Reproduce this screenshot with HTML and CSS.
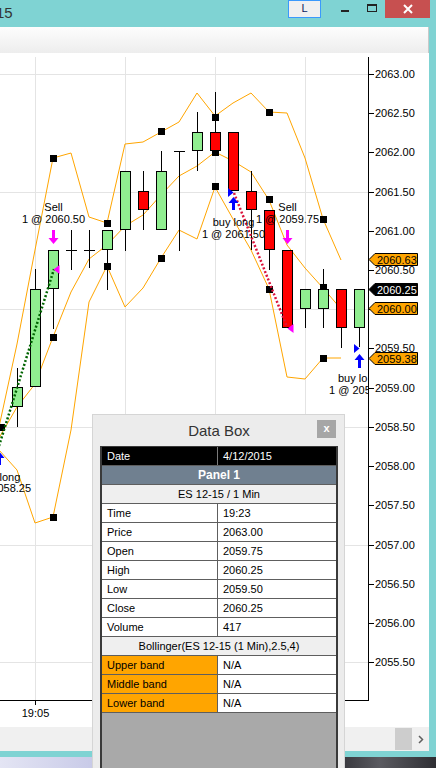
FILE: index.html
```html
<!DOCTYPE html>
<html>
<head>
<meta charset="utf-8">
<title>Chart</title>
<link rel="stylesheet" href="styles.css">
</head>
<body>
<div class="screen">
  <header class="titlebar">
    <div class="title">15</div>
    <div class="lbtn">L</div>
    <div class="cap cap-min"><span class="min-icon"></span></div>
    <div class="cap cap-max"><span class="max-icon"></span></div>
    <div class="cap cap-close">
      <svg width="12" height="12" viewBox="0 0 12 12"><path d="M2 2L10 10M10 2L2 10" stroke="#fff" stroke-width="2"/></svg>
    </div>
  </header>

  <main class="client">
    <div class="toolbar"></div>
    <div class="chart">
      <svg class="chart-svg" width="429" height="674" viewBox="0 53 429 674" xmlns="http://www.w3.org/2000/svg" font-family="Liberation Sans, Arial, sans-serif" font-size="11">
        <defs><clipPath id="plot"><rect x="0" y="53" width="368" height="647"/></clipPath></defs>
        <g stroke="#e4e4e4" shape-rendering="crispEdges">
          <path d="M0 74.5H368M0 192.5H368M0 309.5H368M0 427.5H368M0 545.5H368M0 662.5H368M35.5 57V700M125.5 57V700M215.5 57V700M305.5 57V700"/>
        </g>
        <g clip-path="url(#plot)">
          <g fill="none" stroke="#ffa500" stroke-width="1">
            <polyline points="-1,427 17,344 35,250 53,158 71,153 89,217 107,223 125,144 143,142 161,132 179,122 197,93 215,116 233,103 251,93 269,112 287,113 305,158 323,219 341,260"/>
            <polyline points="-1,438 17,407 35,384 53,337 71,292 89,259 107,245 125,226 143,215 161,195 179,176 197,166 215,152 233,161 251,172 269,200 287,245 305,268 323,288 341,309"/>
            <polyline points="-1,450 17,470 35,523 53,517 71,430 89,302 107,266 125,307 143,288 161,258 179,230 197,239 215,187 233,219 251,250 269,289 287,377 305,379 323,358 341,358"/>
          </g>
          <g fill="#000" shape-rendering="crispEdges">
            <rect x="-2" y="424" width="7" height="7"/>
            <rect x="50" y="155" width="7" height="7"/>
            <rect x="50" y="334" width="7" height="7"/>
            <rect x="50" y="514" width="7" height="7"/>
            <rect x="104" y="220" width="7" height="7"/>
            <rect x="104" y="263" width="7" height="7"/>
            <rect x="158" y="128" width="7" height="7"/>
            <rect x="158" y="255" width="7" height="7"/>
            <rect x="212" y="114" width="7" height="7"/>
            <rect x="212" y="149" width="7" height="7"/>
            <rect x="212" y="183" width="7" height="7"/>
            <rect x="266" y="109" width="7" height="7"/>
            <rect x="266" y="196" width="7" height="7"/>
            <rect x="266" y="286" width="7" height="7"/>
            <rect x="320" y="216" width="7" height="7"/>
            <rect x="320" y="284" width="7" height="7"/>
            <rect x="320" y="355" width="7" height="7"/>
          </g>
          <g stroke="#000" stroke-width="1" shape-rendering="crispEdges">
            <path d="M17.5 368V427M35.5 269V387M53.5 250V329M71.5 230V270M66 250.5H77M89.5 230V268M84 250.5H95M107.5 230V290M125.5 171V251M143.5 171V230M161.5 151V230M179.5 151V251M174 151.5H185M197.5 112V171M215.5 92V151M233.5 132V191M251.5 171V250M269.5 210V270M287.5 250V328M305.5 289V328M323.5 269V328M341.5 289V348M359.5 289V347"/>
            <rect x="12.5" y="387.5" width="10" height="19" fill="#90ee90"/>
            <rect x="30.5" y="289.5" width="10" height="97" fill="#90ee90"/>
            <rect x="48.5" y="250.5" width="10" height="38" fill="#90ee90"/>
            <rect x="102.5" y="230.5" width="10" height="19" fill="#90ee90"/>
            <rect x="120.5" y="171.5" width="10" height="58" fill="#90ee90"/>
            <rect x="138.5" y="191.5" width="10" height="18" fill="#ff0000"/>
            <rect x="156.5" y="171.5" width="10" height="58" fill="#90ee90"/>
            <rect x="192.5" y="132.5" width="10" height="18" fill="#90ee90"/>
            <rect x="210.5" y="132.5" width="10" height="18" fill="#ff0000"/>
            <rect x="228.5" y="132.5" width="10" height="58" fill="#ff0000"/>
            <rect x="246.5" y="191.5" width="10" height="18" fill="#ff0000"/>
            <rect x="264.5" y="210.5" width="10" height="39" fill="#ff0000"/>
            <rect x="282.5" y="250.5" width="10" height="77" fill="#ff0000"/>
            <rect x="300.5" y="289.5" width="10" height="19" fill="#90ee90"/>
            <rect x="318.5" y="289.5" width="10" height="19" fill="#90ee90"/>
            <rect x="336.5" y="289.5" width="10" height="38" fill="#ff0000"/>
            <rect x="354.5" y="289.5" width="10" height="38" fill="#90ee90"/>
          </g>
          <line x1="-1" y1="446" x2="54" y2="269" stroke="#006400" stroke-width="2.5" stroke-dasharray="2 2"/>
          <line x1="234" y1="193" x2="287" y2="327" stroke="#dc143c" stroke-width="2.5" stroke-dasharray="2 2"/>
          <g fill="#ff00ff">
            <path d="M52 230H55V238H58.5L53.5 244L48.5 238H52Z"/>
            <path d="M286 230H289V238H292.5L287.5 244L282.5 238H286Z"/>
            <path d="M59.5 265V274L53.5 269.5Z"/>
            <path d="M293.5 324V333L287.5 328.5Z"/>
          </g>
          <g fill="#0000ff">
            <path d="M233.5 197L238.5 203H235V210H232V203H228.5Z"/>
            <path d="M359.5 354L364.5 360H361V368H358V360H354.5Z"/>
            <path d="M-0.5 452L4.5 458H1V465H-2V458H-5.5Z"/>
            <path d="M228 188V197L233.5 192.5Z"/>
            <path d="M354 344V353L359.5 348.5Z"/>
          </g>
          <g fill="#000" text-anchor="middle">
            <text x="53.5" y="211">Sell</text>
            <text x="53.5" y="223">1 @ 2060.50</text>
            <text x="287.5" y="211">Sell</text>
            <text x="287.5" y="223">1 @ 2059.75</text>
            <text x="233.5" y="226">buy long</text>
            <text x="233.5" y="238">1 @ 2061.50</text>
            <text x="-0.5" y="481">buy long</text>
            <text x="-0.5" y="492">1 @ 2058.25</text>
          </g>
          <g fill="#000">
            <text x="338" y="382">buy lo</text>
            <text x="329" y="394">1 @ 205</text>
          </g>
        </g>
        <g stroke="#000" shape-rendering="crispEdges" fill="none">
          <path d="M368.5 57V700.5M0 700.5H368.5M35.5 700V705M368 74.5H374M368 113.5H374M368 152.5H374M368 192.5H374M368 231.5H374M368 270.5H374M368 309.5H374M368 348.5H374M368 388.5H374M368 427.5H374M368 466.5H374M368 505.5H374M368 545.5H374M368 584.5H374M368 623.5H374M368 662.5H374"/>
        </g>
        <g fill="#000">
          <text x="375" y="78">2063.00</text>
          <text x="375" y="117">2062.50</text>
          <text x="375" y="156">2062.00</text>
          <text x="375" y="196">2061.50</text>
          <text x="375" y="235">2061.00</text>
          <text x="375" y="274">2060.50</text>
          <text x="375" y="352">2059.50</text>
          <text x="375" y="392">2059.00</text>
          <text x="375" y="431">2058.50</text>
          <text x="375" y="470">2058.00</text>
          <text x="375" y="509">2057.50</text>
          <text x="375" y="549">2057.00</text>
          <text x="375" y="588">2056.50</text>
          <text x="375" y="627">2056.00</text>
          <text x="375" y="666">2055.50</text>
          <text x="35.5" y="717" text-anchor="middle">19:05</text>
        </g>
        <g stroke="#000" stroke-width="1">
          <path d="M369 259.5L375 253.5H417.5V265.5H375Z" fill="#ffa500"/>
          <path d="M369 289.5L375 283.5H417.5V295.5H375Z" fill="#000"/>
          <path d="M369 308.5L375 302.5H417.5V314.5H375Z" fill="#ffa500"/>
          <path d="M369 358.5L375 352.5H417.5V364.5H375Z" fill="#ffa500"/>
        </g>
        <g>
          <text x="377" y="263.5" fill="#000">2060.63</text>
          <text x="377" y="293.5" fill="#fff">2060.25</text>
          <text x="377" y="312.5" fill="#000">2060.00</text>
          <text x="377" y="362.5" fill="#000">2059.38</text>
        </g>
      </svg>
    </div>
    <div class="hscroll">
      <div class="track"></div>
      <div class="thumb"></div>
      <div class="arrow">
        <svg width="6" height="9" viewBox="0 0 6 9"><path d="M1 1L4.5 4.5L1 8" fill="none" stroke="#606060" stroke-width="1.5"/></svg>
      </div>
    </div>
  </main>

  <div class="frame-bottom"></div>
  <div class="desktop"></div>

  <section class="databox">
    <div class="db-head">
      <span class="db-spacer"></span>
      <span class="db-title">Data Box</span>
      <span class="db-close">x</span>
    </div>
    <div class="db-table">
      <div class="row row-date"><div class="c1">Date</div><div class="c2">4/12/2015</div></div>
      <div class="row row-panel">Panel 1</div>
      <div class="row row-sub">ES 12-15 / 1 Min</div>
      <div class="row"><div class="c1">Time</div><div class="c2">19:23</div></div>
      <div class="row"><div class="c1">Price</div><div class="c2">2063.00</div></div>
      <div class="row"><div class="c1">Open</div><div class="c2">2059.75</div></div>
      <div class="row"><div class="c1">High</div><div class="c2">2060.25</div></div>
      <div class="row"><div class="c1">Low</div><div class="c2">2059.50</div></div>
      <div class="row"><div class="c1">Close</div><div class="c2">2060.25</div></div>
      <div class="row"><div class="c1">Volume</div><div class="c2">417</div></div>
      <div class="row row-sub">Bollinger(ES 12-15 (1 Min),2.5,4)</div>
      <div class="row row-band"><div class="c1">Upper band</div><div class="c2">N/A</div></div>
      <div class="row row-band"><div class="c1">Middle band</div><div class="c2">N/A</div></div>
      <div class="row row-band"><div class="c1">Lower band</div><div class="c2">N/A</div></div>
      <div class="db-fill"></div>
    </div>
  </section>
</div>
</body>
</html>
```

FILE: styles.css
```css
* { box-sizing: border-box; }
html, body { margin: 0; padding: 0; }
body {
  width: 436px;
  height: 768px;
  overflow: hidden;
  background: #7fd3d3;
  font-family: "Liberation Sans", Arial, sans-serif;
}
.screen {
  position: relative;
  width: 436px;
  height: 768px;
  overflow: hidden;
  display: flex;
  flex-direction: column;
}

/* title bar */
.titlebar {
  display: flex;
  align-items: flex-start;
  height: 27px;
  flex: none;
}
.title {
  flex: 1;
  font-size: 15px;
  line-height: 18px;
  padding-top: 4px;
  margin-left: -4px;
  color: #333;
  overflow: hidden;
  white-space: nowrap;
}
.lbtn {
  width: 33px;
  height: 18px;
  margin-right: 10px;
  border: 1px solid #3b99fc;
  background: #f0f0f0;
  color: #0c1a5c;
  font-size: 11px;
  line-height: 14px;
  text-align: center;
}
.cap {
  height: 18px;
  display: flex;
  justify-content: center;
  align-items: flex-start;
}
.cap-min { width: 27px; }
.cap-max { width: 27px; }
.cap-close {
  width: 45px;
  margin-right: 6px;
  background: #c75050;
  align-items: center;
}
.min-icon {
  width: 8px;
  height: 2px;
  margin-top: 10px;
  background: #222;
}
.max-icon {
  width: 10px;
  height: 8px;
  margin-top: 4px;
  border: 1px solid #222;
  border-top-width: 2px;
}

/* client area */
.client {
  width: 429px;
  height: 724px;
  flex: none;
  display: flex;
  flex-direction: column;
  background: #fff;
}
.toolbar {
  height: 26px;
  flex: none;
  background: linear-gradient(#fdfdfd, #ededed);
  border-right: 1px solid #c9c9c9;
}
.chart {
  height: 674px;
  flex: none;
}
.chart-svg { display: block; }
.hscroll {
  height: 24px;
  flex: none;
  display: flex;
  background: #f0f0f0;
}
.hscroll .track { flex: 1; }
.hscroll .thumb {
  width: 17px;
  margin: 1px 0;
  background: #cdcdcd;
}
.hscroll .arrow {
  width: 17px;
  display: flex;
  align-items: center;
  justify-content: center;
}
.frame-bottom {
  height: 6px;
  flex: none;
}
.desktop {
  height: 11px;
  flex: none;
  background: linear-gradient(90deg, #e4e5f4 0, #c9cbe8 90px, #3a3a40 345px, #5a5a60 380px, #2e2e33 436px);
}

/* data box */
.databox {
  position: absolute;
  left: 92px;
  top: 414px;
  width: 253px;
  height: 354px;
  background: #ececec;
  border: 1px solid #d5d5d5;
  border-bottom: 0;
  padding: 0 6px 0 7px;
  display: flex;
  flex-direction: column;
}
.db-head {
  height: 31px;
  flex: none;
  display: grid;
  grid-template-columns: 1fr auto 1fr;
  align-items: center;
}
.db-title {
  font-size: 15px;
  color: #333;
}
.db-close {
  justify-self: end;
  align-self: start;
  margin-top: 5px;
  margin-right: 2px;
  width: 19px;
  height: 18px;
  background: #a6a6a6;
  color: #fff;
  font-size: 11px;
  font-weight: bold;
  line-height: 17px;
  text-align: center;
}
.db-table {
  flex: 1;
  display: flex;
  flex-direction: column;
  border-left: 2px solid #3a3a3a;
  border-right: 2px solid #3a3a3a;
  border-top: 1px solid #3a3a3a;
  background: #a9a9a9;
  font-size: 11px;
  color: #000;
}
.row {
  display: flex;
  height: 19px;
  flex: none;
  background: #fff;
  border-bottom: 1px solid #5e5e5e;
  line-height: 18px;
  white-space: nowrap;
}
.c1 {
  width: 116px;
  padding-left: 5px;
  border-right: 1px solid #5e5e5e;
}
.c2 {
  flex: 1;
  padding-left: 5px;
}
.row-date {
  background: #000;
  color: #fff;
}
.row-date .c1 { border-right-color: #7a7a7a; }
.row-panel {
  justify-content: center;
  background: #708090;
  color: #fff;
  font-weight: bold;
  font-size: 12px;
}
.row-sub {
  justify-content: center;
  background: #efefef;
}
.row-band .c1 { background: #ffa500; }
.db-fill { flex: 1; }
```
